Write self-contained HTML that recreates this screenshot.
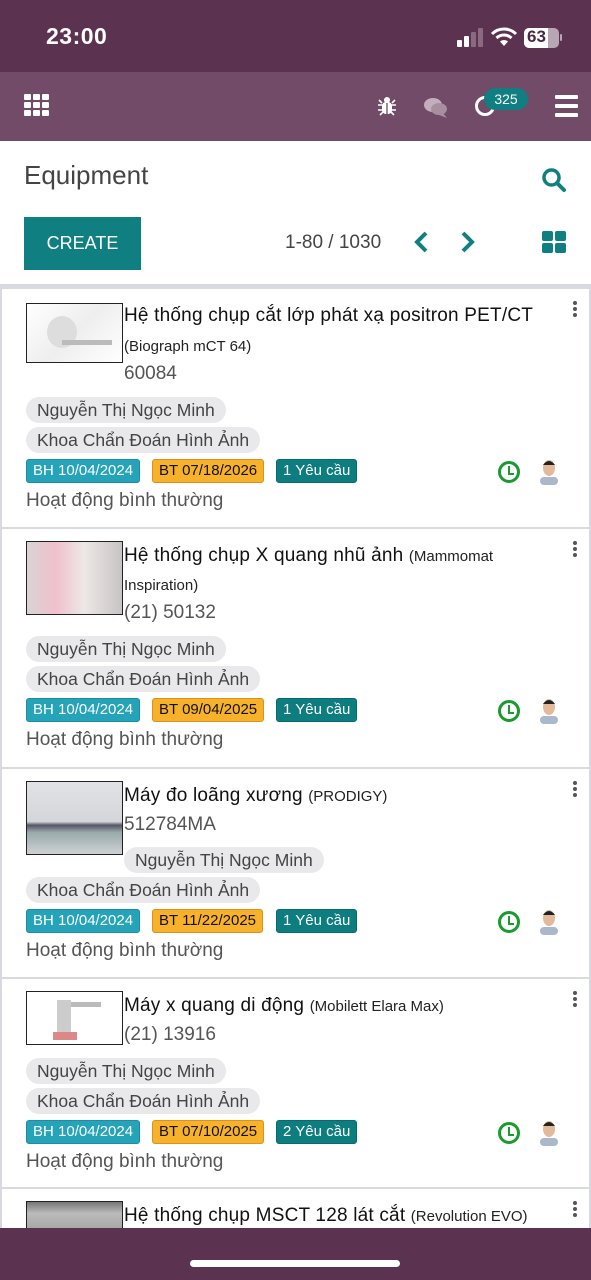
<!DOCTYPE html>
<html><head><meta charset="utf-8"><style>
*{margin:0;padding:0;box-sizing:border-box}
body{width:591px;height:1280px;overflow:hidden;position:relative;background:#fff;font-family:"Liberation Sans","DejaVu Sans",sans-serif;color:#212529}
.a{position:absolute;white-space:nowrap}
.status{left:0;top:0;width:591px;height:72px;background:#5b3350}
.nav{left:0;top:72px;width:591px;height:69px;background:#714b67}
.card{position:absolute;left:2px;width:587px;background:#fff;border-top:2px solid #d9dadf}
.img{position:absolute;left:24px;width:97px;border:1.5px solid #222;overflow:hidden}
.t{position:absolute;left:122px;font-size:19px;letter-spacing:0.2px;color:#111;white-space:nowrap;line-height:22px}
.t small{font-size:15px;letter-spacing:0;color:#222}
.num{position:absolute;left:122px;font-size:19px;color:#555}
.tag{position:absolute;height:26px;line-height:26px;padding:0 11px;background:#e9e9ec;border-radius:13px;font-size:17.5px;color:#444;white-space:nowrap}
.b{position:absolute;height:24px;line-height:22px;font-size:15px;border-radius:3px;padding:0 6px;white-space:nowrap;border:1px solid}
.bh{left:24px;background:#24a3b9;color:#fff;border-color:#1b8ea2}
.bt{left:150px;background:#f7b12a;color:#111;border-color:#d8941a}
.yc{left:274px;background:#0e7d80;color:#fff;border-color:#0a6b6e}
.st{position:absolute;left:24px;font-size:19px;color:#555}
.dots{position:absolute;right:12px;width:4px}
.dots i{display:block;width:4px;height:4px;border-radius:2px;background:#555;margin-bottom:2px}
.clock{position:absolute;left:496px;width:22px;height:22px;border:3px solid #1a9b2f;border-radius:50%}
.clock:after{content:"";position:absolute;left:7px;top:2px;width:4px;height:7px;border-left:2.5px solid #1a9b2f;border-bottom:2.5px solid #1a9b2f}
.av{position:absolute;left:536px;width:22px;height:28px}
</style></head><body>
<div class="a status"></div>
<div class="a" style="left:46px;top:23px;color:#fff;font-size:23px;font-weight:bold;letter-spacing:0.5px">23:00</div>
<div class="a" style="left:457px;top:40px;width:5px;height:7px;background:#fff;border-radius:1px"></div>
<div class="a" style="left:464px;top:36px;width:5px;height:11px;background:#fff;border-radius:1px"></div>
<div class="a" style="left:471px;top:32px;width:5px;height:15px;background:#8a6a80;border-radius:1px"></div>
<div class="a" style="left:478px;top:28px;width:5px;height:19px;background:#8a6a80;border-radius:1px"></div>
<svg class="a" style="left:491px;top:27px" width="26" height="20" viewBox="0 0 26 20"><path d="M1 7 A17 17 0 0 1 25 7" stroke="#fff" stroke-width="3" fill="none"/><path d="M5.5 11 A11 11 0 0 1 20.5 11" stroke="#fff" stroke-width="3" fill="none"/><path d="M13 19 L9 14.5 A6 6 0 0 1 17 14.5Z" fill="#fff"/></svg>
<div class="a" style="left:524px;top:28px;width:35px;height:20px;background:#b9a6b4;border-radius:5px;overflow:hidden"><div style="width:24px;height:20px;background:#fff"></div></div>
<div class="a" style="left:527px;top:27px;font-size:17px;font-weight:bold;color:#4a2a42">63</div>
<div class="a" style="left:560px;top:34px;width:2px;height:7px;background:#b9a6b4;border-radius:1px"></div>

<div class="a nav"></div>
<svg class="a" style="left:24px;top:94px" width="26" height="22"><g fill="#fff"><rect x="0" y="0" width="7" height="6" rx="1"/><rect x="9" y="0" width="7" height="6" rx="1"/><rect x="18" y="0" width="7" height="6" rx="1"/><rect x="0" y="8" width="7" height="6" rx="1"/><rect x="9" y="8" width="7" height="6" rx="1"/><rect x="18" y="8" width="7" height="6" rx="1"/><rect x="0" y="16" width="7" height="6" rx="1"/><rect x="9" y="16" width="7" height="6" rx="1"/><rect x="18" y="16" width="7" height="6" rx="1"/></g></svg>
<svg class="a" style="left:377px;top:96px" width="20" height="20" viewBox="0 0 20 20"><g fill="#fff"><circle cx="10" cy="4" r="3"/><rect x="5" y="6" width="10" height="12" rx="4"/><path d="M1 9h18M1 14h18M2 4l3 3M18 4l-3 3M3 19l3-3M17 19l-3-3" stroke="#fff" stroke-width="1.6"/></g><path d="M10 7v11" stroke="#714b67" stroke-width="1.3"/></svg>
<svg class="a" style="left:423px;top:97px" width="26" height="22" viewBox="0 0 26 22"><ellipse cx="10" cy="8" rx="9" ry="7" fill="#c2aebc"/><ellipse cx="16" cy="12" rx="8" ry="6" fill="#a88e9f"/><path d="M20 16 l4 5 -8-3z" fill="#a88e9f"/></svg>
<div class="a" style="left:475px;top:96px;width:20px;height:20px;border:3px solid #fff;border-radius:50%"></div>
<div class="a" style="left:484px;top:88px;width:44px;height:22px;background:#0f7f82;border-radius:11px;color:#fff;font-size:14px;line-height:22px;text-align:center">325</div>
<div class="a" style="left:555px;top:95px;width:23px;height:4px;background:#fff;border-radius:1px"></div>
<div class="a" style="left:555px;top:104px;width:23px;height:4px;background:#fff;border-radius:1px"></div>
<div class="a" style="left:555px;top:113px;width:23px;height:4px;background:#fff;border-radius:1px"></div>

<div class="a" style="left:24px;top:160px;font-size:26px;color:#444">Equipment</div>
<svg class="a" style="left:541px;top:167px" width="26" height="26" viewBox="0 0 26 26"><circle cx="10.5" cy="10.5" r="7.5" stroke="#0f7f82" stroke-width="3.5" fill="none"/><path d="M16 16l7 7" stroke="#0f7f82" stroke-width="4" stroke-linecap="round"/></svg>
<div class="a" style="left:24px;top:217px;width:117px;height:53px;background:#0f7f82;color:#fff;font-size:18px;line-height:53px;text-align:center">CREATE</div>
<div class="a" style="left:285px;top:232px;font-size:19px;color:#444">1-80 / 1030</div>
<svg class="a" style="left:412px;top:230px" width="18" height="24"><path d="M14 3L5 12l9 9" stroke="#0f7f82" stroke-width="4" fill="none"/></svg>
<svg class="a" style="left:459px;top:230px" width="18" height="24"><path d="M4 3l9 9-9 9" stroke="#0f7f82" stroke-width="4" fill="none"/></svg>
<svg class="a" style="left:542px;top:231px" width="26" height="24"><g fill="#0f7f82"><rect x="0" y="0" width="11" height="10" rx="2"/><rect x="13" y="0" width="11" height="10" rx="2"/><rect x="0" y="12" width="11" height="10" rx="2"/><rect x="13" y="12" width="11" height="10" rx="2"/></g></svg>
<div class="a" style="left:0;top:284px;width:591px;height:4px;background:#d9dadf"></div>
<div class="a" style="left:0;top:284px;width:2px;height:950px;background:#d9dadf"></div>
<div class="a" style="left:589px;top:284px;width:2px;height:950px;background:#d9dadf"></div>

<!-- card 1 -->
<div class="card" style="top:287px;height:240px">
 <div class="img" style="top:14px;height:60px;background:linear-gradient(135deg,#fff 0%,#eee 50%,#fff 100%)"><div style="position:absolute;left:20px;top:12px;width:30px;height:32px;border-radius:50%;background:#ddd"></div><div style="position:absolute;left:35px;top:36px;width:50px;height:5px;background:#bbb"></div></div>
 <div class="t" style="top:16px">Hệ thống chụp cắt lớp phát xạ positron PET/CT</div>
 <div class="t" style="top:46px"><small>(Biograph mCT 64)</small></div>
 <div class="num" style="top:74px">60084</div>
 <div class="tag" style="left:24px;top:108px">Nguyễn Thị Ngọc Minh</div>
 <div class="tag" style="left:24px;top:138px">Khoa Chẩn Đoán Hình Ảnh</div>
 <div class="b bh" style="top:170px">BH 10/04/2024</div>
 <div class="b bt" style="top:170px">BT 07/18/2026</div>
 <div class="b yc" style="top:170px">1 Yêu cầu</div>
 <div class="clock" style="top:172px"></div>
 <svg class="av" style="top:168px" viewBox="0 0 22 28"><rect x="2" y="20" width="18" height="8" rx="4" fill="#aab8cc"/><ellipse cx="11" cy="11" rx="6" ry="8" fill="#e3b99a"/><path d="M5 8q6-8 12 0" fill="#222"/></svg>
 <div class="st" style="top:201px">Hoạt động bình thường</div>
 <div class="dots" style="top:12px"><i></i><i></i><i></i></div>
</div>
<!-- card 2 -->
<div class="card" style="top:527px;height:240px">
 <div class="img" style="top:12px;height:74px;background:linear-gradient(90deg,#d9d4d4,#f0c0cc 30%,#ece8e6 60%,#c9c4c4)"></div>
 <div class="t" style="top:16px">Hệ thống chụp X quang nhũ ảnh <small>(Mammomat</small></div>
 <div class="t" style="top:45px"><small>Inspiration)</small></div>
 <div class="num" style="top:73px">(21) 50132</div>
 <div class="tag" style="left:24px;top:107px">Nguyễn Thị Ngọc Minh</div>
 <div class="tag" style="left:24px;top:137px">Khoa Chẩn Đoán Hình Ảnh</div>
 <div class="b bh" style="top:169px">BH 10/04/2024</div>
 <div class="b bt" style="top:169px">BT 09/04/2025</div>
 <div class="b yc" style="top:169px">1 Yêu cầu</div>
 <div class="clock" style="top:171px"></div>
 <svg class="av" style="top:167px" viewBox="0 0 22 28"><rect x="2" y="20" width="18" height="8" rx="4" fill="#aab8cc"/><ellipse cx="11" cy="11" rx="6" ry="8" fill="#e3b99a"/><path d="M5 8q6-8 12 0" fill="#222"/></svg>
 <div class="st" style="top:200px">Hoạt động bình thường</div>
 <div class="dots" style="top:12px"><i></i><i></i><i></i></div>
</div>
<!-- card 3 -->
<div class="card" style="top:767px;height:211px">
 <div class="img" style="top:12px;height:74px;background:linear-gradient(180deg,#e0e2e6,#d4d6da 55%,#556 60%,#9aa 70%,#cfd1d4)"></div>
 <div class="t" style="top:16px">Máy đo loãng xương <small>(PRODIGY)</small></div>
 <div class="num" style="top:45px">512784MA</div>
 <div class="tag" style="left:122px;top:78px">Nguyễn Thị Ngọc Minh</div>
 <div class="tag" style="left:24px;top:108px">Khoa Chẩn Đoán Hình Ảnh</div>
 <div class="b bh" style="top:140px">BH 10/04/2024</div>
 <div class="b bt" style="top:140px">BT 11/22/2025</div>
 <div class="b yc" style="top:140px">1 Yêu cầu</div>
 <div class="clock" style="top:142px"></div>
 <svg class="av" style="top:138px" viewBox="0 0 22 28"><rect x="2" y="20" width="18" height="8" rx="4" fill="#aab8cc"/><ellipse cx="11" cy="11" rx="6" ry="8" fill="#e3b99a"/><path d="M5 8q6-8 12 0" fill="#222"/></svg>
 <div class="st" style="top:171px">Hoạt động bình thường</div>
 <div class="dots" style="top:12px"><i></i><i></i><i></i></div>
</div>
<!-- card 4 -->
<div class="card" style="top:977px;height:211px">
 <div class="img" style="top:12px;height:54px;background:#fff"><div style="position:absolute;left:30px;top:8px;width:14px;height:38px;background:#ccc"></div><div style="position:absolute;left:44px;top:10px;width:30px;height:5px;background:#bbb"></div><div style="position:absolute;left:26px;top:40px;width:24px;height:8px;background:#d88"></div></div>
 <div class="t" style="top:16px">Máy x quang di động <small>(Mobilett Elara Max)</small></div>
 <div class="num" style="top:45px">(21) 13916</div>
 <div class="tag" style="left:24px;top:79px">Nguyễn Thị Ngọc Minh</div>
 <div class="tag" style="left:24px;top:109px">Khoa Chẩn Đoán Hình Ảnh</div>
 <div class="b bh" style="top:141px">BH 10/04/2024</div>
 <div class="b bt" style="top:141px">BT 07/10/2025</div>
 <div class="b yc" style="top:141px">2 Yêu cầu</div>
 <div class="clock" style="top:143px"></div>
 <svg class="av" style="top:139px" viewBox="0 0 22 28"><rect x="2" y="20" width="18" height="8" rx="4" fill="#aab8cc"/><ellipse cx="11" cy="11" rx="6" ry="8" fill="#e3b99a"/><path d="M5 8q6-8 12 0" fill="#222"/></svg>
 <div class="st" style="top:172px">Hoạt động bình thường</div>
 <div class="dots" style="top:12px"><i></i><i></i><i></i></div>
</div>
<!-- card 5 -->
<div class="card" style="top:1187px;height:50px">
 <div class="img" style="top:12px;height:40px;background:linear-gradient(180deg,#777,#bbb 30%,#999)"></div>
 <div class="t" style="top:16px">Hệ thống chụp MSCT 128 lát cắt <small>(Revolution EVO)</small></div>
 <div class="dots" style="top:12px"><i></i><i></i><i></i></div>
</div>
<div class="a" style="left:0;top:1228px;width:591px;height:52px;background:#5b3350"></div>
<div class="a" style="left:190px;top:1260px;width:210px;height:7px;background:#fff;border-radius:4px"></div>
</body></html>
